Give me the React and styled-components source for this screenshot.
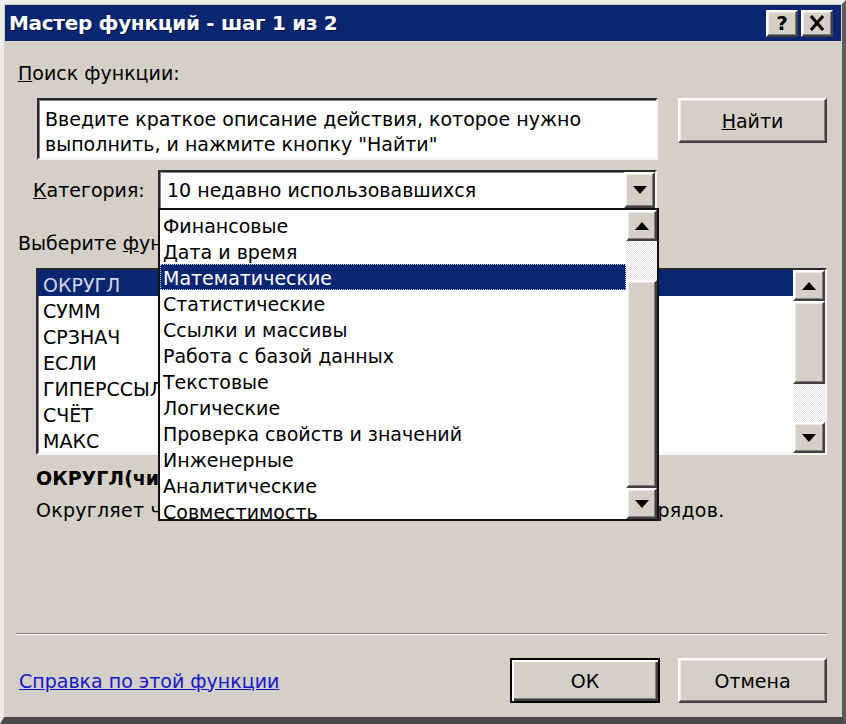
import React from "react"
import styled, { createGlobalStyle } from "styled-components"

const GlobalStyle = createGlobalStyle`
  html, body {
    margin: 0;
    padding: 0;
    background: #d4d0c8;
  }
  body {
    font-family: "DejaVu Sans", "Noto Sans", sans-serif;
  }
`

const raised = `
  box-sizing: border-box;
  background: #d4d0c8;
  border: 2px solid;
  border-color: #ffffff #404040 #404040 #ffffff;
  box-shadow: inset -1px -1px 0 #808080, inset 1px 1px 0 #ecebe7;
`

const sunken = `
  box-sizing: border-box;
  border: 2px solid;
  border-color: #2a2a2a #f4f4f4 #f4f4f4 #2a2a2a;
  box-shadow: inset 1px 1px 0 #808080;
`

const Window = styled.div`
  box-sizing: border-box;
  width: 846px;
  height: 724px;
  background: #d4d0c8;
  border-style: solid;
  border-width: 4px 4px 7px 4px;
  border-color: #efede9 #5c5c5c #4a4a4a #efede9;
  padding: 1px;
  display: flex;
  flex-direction: column;
  overflow: hidden;
  color: #000;
  font-size: 19px;
`

const TitleBar = styled.div`
  height: 36px;
  flex-shrink: 0;
  background: #0b2670;
  display: flex;
  align-items: center;
  padding: 0 8px 0 4px;
  gap: 3px;
`

const TitleText = styled.div`
  flex: 1;
  color: #fff;
  font-weight: bold;
  font-size: 20px;
  letter-spacing: -0.3px;
  text-shadow: 1px 1px 0 #02103a;
`

const TitleButton = styled.div`
  ${raised}
  width: 32px;
  height: 27px;
  display: flex;
  align-items: center;
  justify-content: center;
  font-weight: bold;
  font-size: 20px;
  color: #000;
`

const Body = styled.div`
  flex: 1;
  display: flex;
  flex-direction: column;
  padding: 0 14px 0 13px;
`

const Caption = styled.div`
  margin: ${(p) => p.$top || 0}px 0 0 ${(p) => p.$left || 0}px;
  line-height: 24px;
  white-space: nowrap;
  font-weight: ${(p) => (p.$bold ? "bold" : "normal")};
  letter-spacing: ${(p) => p.$spacing || 0}px;
`

const Row = styled.div`
  display: flex;
  align-items: ${(p) => p.$align || "flex-start"};
  margin-top: ${(p) => p.$top || 0}px;
`

const SearchBox = styled.div`
  ${sunken}
  background: #fdfdfd;
  margin-left: 19px;
  width: 621px;
  height: 62px;
  padding: 7px 6px 0;
  line-height: 25px;
`

const PushButton = styled.div`
  ${raised}
  width: ${(p) => p.$width}px;
  height: 45px;
  margin-left: ${(p) => p.$left || 0}px;
  display: flex;
  align-items: center;
  justify-content: center;
  ${(p) =>
    p.$default &&
    `
    border-color: #000;
    box-shadow: inset 2px 2px 0 #fff, inset -2px -2px 0 #404040, inset -3px -3px 0 #808080;
  `}
`

const CategoryLabel = styled.div`
  box-sizing: border-box;
  width: 140px;
  padding-left: 15px;
  white-space: nowrap;
`

const Combo = styled.div`
  ${sunken}
  position: relative;
  width: 499px;
  height: 40px;
  background: #fdfdfd;
  display: flex;
  align-items: center;
`

const ComboText = styled.div`
  flex: 1;
  padding-left: 7px;
  white-space: nowrap;
`

const ComboButton = styled.div`
  ${raised}
  width: 31px;
  height: 36px;
  display: flex;
  align-items: center;
  justify-content: center;
`

const DropList = styled.div`
  position: absolute;
  top: 36px;
  left: -2px;
  z-index: 3;
  box-sizing: border-box;
  width: 501px;
  height: 313px;
  border: 2px solid #111;
  background: #fdfdfd;
  display: flex;
`

const Items = styled.div`
  flex: 1;
  padding-top: ${(p) => p.$pad || 0}px;
  overflow: hidden;
`

const Item = styled.div`
  box-sizing: border-box;
  height: 26px;
  padding-top: ${(p) => p.$shift || 0}px;
  line-height: ${(p) => 26 - (p.$shift || 0)}px;
  padding-left: ${(p) => p.$indent}px;
  white-space: nowrap;
  background: ${(p) => (p.$selected ? "#0b2670" : "transparent")};
  color: ${(p) => (p.$selected ? p.$selColor : "#000")};
  ${(p) => p.$focus && "outline: 1px dotted #c8cde0; outline-offset: -1px;"}
`

const ScrollBar = styled.div`
  width: ${(p) => p.$width}px;
  display: flex;
  flex-direction: column;
  flex-shrink: 0;
`

const ScrollButton = styled.div`
  ${raised}
  height: 31px;
  flex-shrink: 0;
  display: flex;
  align-items: center;
  justify-content: center;
`

const Track = styled.div`
  height: ${(p) => (p.$size ? `${p.$size}px` : "auto")};
  flex: ${(p) => (p.$size ? "0 0 auto" : "1")};
  background-color: #f1efeb;
  background-image: repeating-conic-gradient(#ffffff 0 25%, #e2e0dc 0 50%);
  background-size: 2px 2px;
`

const Thumb = styled.div`
  ${raised}
  height: ${(p) => (p.$size ? `${p.$size}px` : "auto")};
  flex: ${(p) => (p.$size ? "0 0 auto" : "1")};
`

const FunctionList = styled.div`
  ${sunken}
  margin: 13px 0 0 18px;
  width: 791px;
  height: 187px;
  background: #fdfdfd;
  display: flex;
`

const Separator = styled.div`
  margin: 111px 0 0 -2px;
  height: 0;
  border-top: 1px solid #808080;
  border-bottom: 1px solid #ffffff;
`

const HelpLink = styled.a`
  flex: 1;
  margin-left: 1px;
  color: #1616c8;
  text-decoration: underline;
  cursor: pointer;
  white-space: nowrap;
`

const Arrow = ({ up }) => (
  <svg width="14" height="8" viewBox="0 0 14 8">
    <polygon points={up ? "0,8 14,8 7,0" : "0,0 14,0 7,8"} fill="#000" />
  </svg>
)

const CloseGlyph = () => (
  <svg width="14" height="16" viewBox="0 0 14 16">
    <path d="M1 1 L13 15 M13 1 L1 15" stroke="#000" strokeWidth="3" />
  </svg>
)

const categories = [
  "Финансовые",
  "Дата и время",
  "Математические",
  "Статистические",
  "Ссылки и массивы",
  "Работа с базой данных",
  "Текстовые",
  "Логические",
  "Проверка свойств и значений",
  "Инженерные",
  "Аналитические",
  "Совместимость",
]

const functions = ["ОКРУГЛ", "СУММ", "СРЗНАЧ", "ЕСЛИ", "ГИПЕРССЫЛКА", "СЧЁТ", "МАКС"]

const App = () => {
  return (
    <>
      <GlobalStyle />
      <Window>
        <TitleBar>
          <TitleText>Мастер функций - шаг 1 из 2</TitleText>
          <TitleButton>?</TitleButton>
          <TitleButton>
            <CloseGlyph />
          </TitleButton>
        </TitleBar>

        <Body>
          <Caption $top={20}>
            <u>П</u>оиск функции:
          </Caption>

          <Row $top={13}>
            <SearchBox>
              Введите краткое описание действия, которое нужно
              <br />
              выполнить, и нажмите кнопку "Найти"
            </SearchBox>
            <PushButton $width={149} $left={20}>
              <span>
                <u>Н</u>айти
              </span>
            </PushButton>
          </Row>

          <Row $top={10} $align="center">
            <CategoryLabel>
              <u>К</u>атегория:
            </CategoryLabel>
            <Combo>
              <ComboText>10 недавно использовавшихся</ComboText>
              <ComboButton>
                <Arrow />
              </ComboButton>
              <DropList>
                <Items $pad={2}>
                  {categories.map((c) => (
                    <Item
                      key={c}
                      $indent={3}
                      $shift={2}
                      $selected={c === "Математические"}
                      $selColor="#ffffff"
                      $focus={c === "Математические"}
                    >
                      {c}
                    </Item>
                  ))}
                </Items>
                <ScrollBar $width={31}>
                  <ScrollButton>
                    <Arrow up />
                  </ScrollButton>
                  <Track $size={39} />
                  <Thumb />
                  <ScrollButton>
                    <Arrow />
                  </ScrollButton>
                </ScrollBar>
              </DropList>
            </Combo>
          </Row>

          <Caption $top={21}>
            Выберите <u>ф</u>ункцию:
          </Caption>

          <FunctionList>
            <Items $pad={0}>
              {functions.map((f, i) => (
                <Item key={f} $indent={5} $shift={4} $selected={i === 0} $selColor="#d2d6e4">
                  {f}
                </Item>
              ))}
            </Items>
            <ScrollBar $width={32}>
              <ScrollButton>
                <Arrow up />
              </ScrollButton>
              <Thumb $size={83} />
              <Track />
              <ScrollButton>
                <Arrow />
              </ScrollButton>
            </ScrollBar>
          </FunctionList>

          <Caption $top={11} $left={18} $bold>
            ОКРУГЛ(число;число_разрядов)
          </Caption>
          <Caption $top={8} $left={18} $spacing={0.25}>
            Округляет число до указанного количества десятичных разрядов.
          </Caption>

          <Separator />

          <Row $top={23} $align="center">
            <HelpLink>Справка по этой функции</HelpLink>
            <PushButton $width={150} $default>
              ОК
            </PushButton>
            <PushButton $width={149} $left={18}>
              Отмена
            </PushButton>
          </Row>
        </Body>
      </Window>
    </>
  )
}

export default App
